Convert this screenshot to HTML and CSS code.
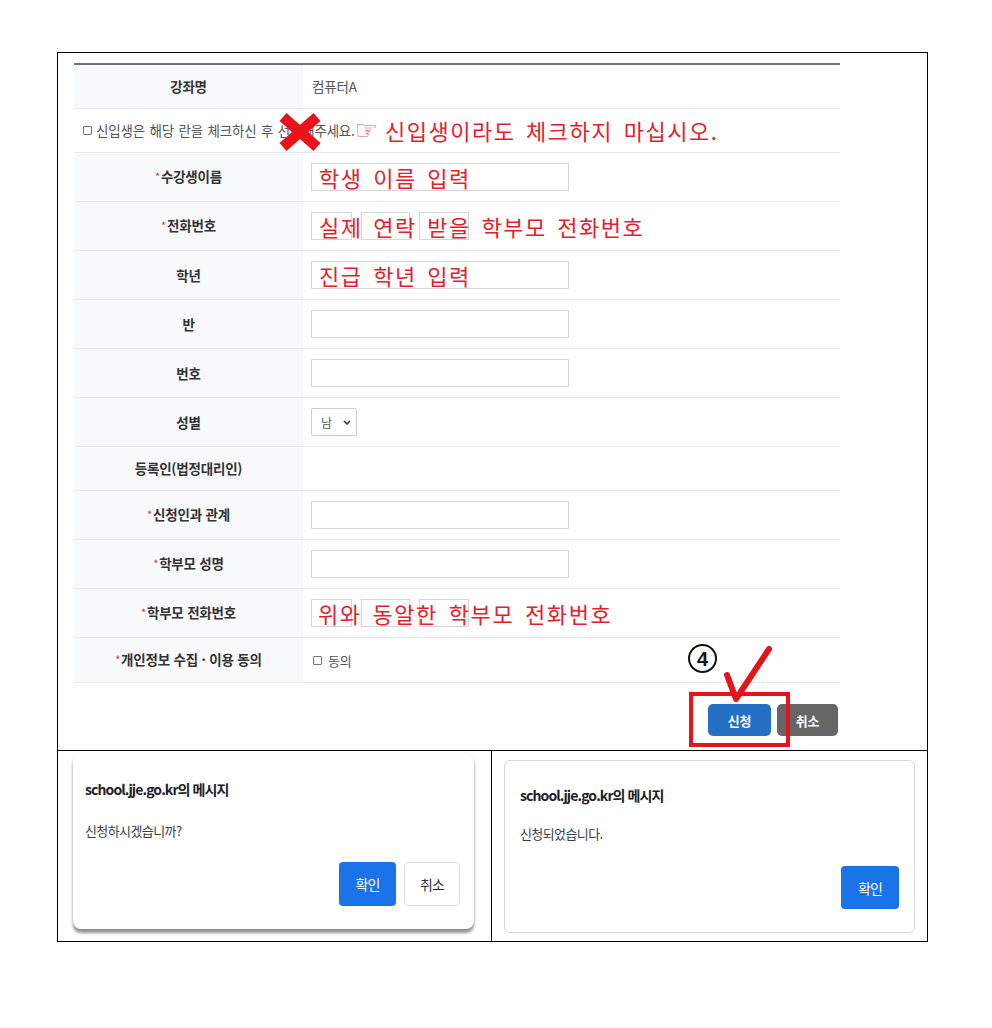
FILE: index.html
```html
<!DOCTYPE html>
<html lang="ko">
<head>
<meta charset="utf-8">
<title>방과후 수강 신청</title>
<link rel="stylesheet" href="styles.css">
</head>
<body>
<table class="sheet">
  <colgroup><col class="col-left"><col class="col-right"></colgroup>
  <tr>
    <td class="sheet-top" colspan="2">
      <div class="apply">
        <table class="form">
          <tr>
            <th>강좌명</th>
            <td class="value">컴퓨터A</td>
          </tr>
          <tr>
            <td class="notice" colspan="2">
              <div class="notice-line">
                <span class="box"></span>
                <span class="notice-text">신입생은 해당 란을 체크하신 후 선택해주세요.</span>
                <span class="hand">☞</span>
                <span class="note-inline">신입생이라도 체크하지 마십시오.</span>
              </div>
              <svg class="cross" viewBox="0 0 46 38" aria-hidden="true">
                <path d="M6 4 L40 34 M40 4 L6 34" />
              </svg>
            </td>
          </tr>
          <tr>
            <th><span class="req">*</span>수강생이름</th>
            <td class="input-cell">
              <div class="field">
                <input class="input" type="text">
                <span class="note">학생 이름 입력</span>
              </div>
            </td>
          </tr>
          <tr>
            <th><span class="req">*</span>전화번호</th>
            <td class="input-cell">
              <div class="field phone">
                <input class="input tel-1" type="text">
                <input class="input tel-2" type="text">
                <input class="input tel-3" type="text">
                <span class="note">실제 연락 받을 학부모 전화번호</span>
              </div>
            </td>
          </tr>
          <tr>
            <th>학년</th>
            <td class="input-cell">
              <div class="field">
                <input class="input" type="text">
                <span class="note">진급 학년 입력</span>
              </div>
            </td>
          </tr>
          <tr>
            <th>반</th>
            <td class="input-cell"><div class="field"><input class="input" type="text"></div></td>
          </tr>
          <tr>
            <th>번호</th>
            <td class="input-cell"><div class="field"><input class="input" type="text"></div></td>
          </tr>
          <tr>
            <th>성별</th>
            <td class="input-cell">
              <div class="field">
                <span class="select">남<svg class="chev" viewBox="0 0 8 5" aria-hidden="true"><path d="M1 1 L4 4 L7 1" /></svg></span>
              </div>
            </td>
          </tr>
          <tr>
            <th>등록인(법정대리인)</th>
            <td class="value"></td>
          </tr>
          <tr>
            <th><span class="req">*</span>신청인과 관계</th>
            <td class="input-cell"><div class="field"><input class="input" type="text"></div></td>
          </tr>
          <tr>
            <th><span class="req">*</span>학부모 성명</th>
            <td class="input-cell"><div class="field"><input class="input" type="text"></div></td>
          </tr>
          <tr>
            <th><span class="req">*</span>학부모 전화번호</th>
            <td class="input-cell">
              <div class="field phone">
                <input class="input tel-1" type="text">
                <input class="input tel-2" type="text">
                <input class="input tel-3" type="text">
                <span class="note note-tight">위와 동알한 학부모 전화번호</span>
              </div>
            </td>
          </tr>
          <tr>
            <th><span class="req">*</span>개인정보 수집 · 이용 동의</th>
            <td class="value"><span class="agree"><span class="box"></span>동의</span></td>
          </tr>
        </table>

        <div class="actions">
          <span class="step">4</span>
          <svg class="tick" viewBox="0 0 62 62" aria-hidden="true">
            <path d="M15 31 L24 55 L57 5" />
          </svg>
          <button class="btn btn-apply" type="button">신청</button>
          <button class="btn btn-cancel" type="button">취소</button>
          <span class="frame"></span>
        </div>
      </div>
    </td>
  </tr>
  <tr class="sheet-bottom">
    <td>
      <div class="dialog dialog-confirm">
        <p class="dialog-title">school.jje.go.kr의 메시지</p>
        <p class="dialog-msg">신청하시겠습니까?</p>
        <div class="dialog-actions">
          <button class="dbtn dbtn-primary" type="button">확인</button>
          <button class="dbtn dbtn-ghost" type="button">취소</button>
        </div>
      </div>
    </td>
    <td>
      <div class="dialog dialog-done">
        <p class="dialog-title">school.jje.go.kr의 메시지</p>
        <p class="dialog-msg">신청되었습니다.</p>
        <div class="dialog-actions">
          <button class="dbtn dbtn-primary" type="button">확인</button>
        </div>
      </div>
    </td>
  </tr>
</table>
</body>
</html>
```

FILE: styles.css
```css
* { box-sizing: border-box; }

html, body {
  margin: 0;
  background: #fff;
}

body {
  font-family: "Noto Sans CJK KR", "Noto Sans", sans-serif;
  color: #333;
}

/* outer sheet: one wide cell on top, two dialog cells below */
.sheet {
  border-collapse: collapse;
  table-layout: fixed;
  width: 870px;
  margin: 52px 0 0 57px;
}

.col-left { width: 434px; }
.col-right { width: 436px; }

.sheet td {
  border: 1px solid #000;
  padding: 0;
  vertical-align: top;
}

.sheet .sheet-top {
  padding: 10px 0 14px 16px;
}

.apply {
  width: 766px;
}

/* application form */
.form {
  width: 766px;
  border-collapse: collapse;
  border-top: 2px solid #6b7079;
  font-size: 13.5px;
  letter-spacing: -0.2px;
}

.form th,
.form td {
  border: 0;
  border-bottom: 1px solid #e8e8e8;
  line-height: 19px;
  vertical-align: middle;
}

.form th {
  width: 229px;
  background: #f8f9fa;
  color: #333;
  font-weight: 700;
  text-align: center;
  padding: 12px 6px;
}

.form td.value {
  padding: 12px 9px;
  color: #555;
}

.form td.input-cell {
  padding: 10px 8px;
}

.req {
  color: #d9363e;
  font-size: 11px;
  font-weight: 400;
  margin-right: 1px;
  position: relative;
  top: -1px;
}

.form td.notice {
  position: relative;
  padding: 12px 9px;
  color: #555;
}

.notice-line {
  display: flex;
  align-items: center;
  height: 19px;
  white-space: nowrap;
}

.box {
  display: inline-block;
  width: 9px;
  height: 9px;
  border: 1px solid #777;
  border-radius: 1px;
  margin-right: 4px;
  flex: none;
}

.notice-text {
  word-spacing: 1px;
}

.hand {
  font-family: "DejaVu Sans", sans-serif;
  color: #e0505f;
  font-size: 26px;
  line-height: 19px;
  margin-left: 0;
  letter-spacing: 0;
}

.note-inline,
.note {
  color: #e3212a;
  font-size: 22px;
  font-weight: 400;
  letter-spacing: 1.5px;
  word-spacing: 3px;
  white-space: nowrap;
}

.note-inline {
  line-height: 19px;
  margin-left: 7px;
}

.cross {
  position: absolute;
  left: 203px;
  top: 4px;
  width: 46px;
  height: 38px;
}

.cross path {
  fill: none;
  stroke: #e8131b;
  stroke-width: 10.5;
}

/* inputs */
.field {
  position: relative;
  display: flex;
  align-items: center;
  width: max-content;
}

.input {
  display: block;
  width: 258px;
  height: 28px;
  margin: 0;
  padding: 0 6px;
  border: 1px solid #d6d6d6;
  border-radius: 0;
  background: #fff;
  font: inherit;
}

.phone {
  gap: 9px;
}

.input.tel-1 { width: 41px; }
.input.tel-2 { width: 49px; }
.input.tel-3 { width: 50px; }

.note {
  position: absolute;
  left: 8px;
  top: 50%;
  transform: translateY(-50%);
  line-height: 24px;
}

.note-tight {
  left: 7px;
  letter-spacing: 1.6px;
}

.select {
  display: flex;
  align-items: center;
  justify-content: space-between;
  width: 46px;
  height: 28px;
  padding: 0 5px 0 9px;
  border: 1px solid #cfcfcf;
  border-radius: 2px;
  color: #555;
  font-size: 12px;
}

.chev {
  width: 8px;
  height: 5px;
}

.chev path {
  fill: none;
  stroke: #333;
  stroke-width: 1.5;
}

.agree {
  display: inline-flex;
  align-items: center;
  padding-left: 1px;
  font-size: 13px;
}

.agree .box {
  margin-right: 6px;
}

/* submit buttons with step marker */
.actions {
  position: relative;
  display: flex;
  justify-content: flex-end;
  gap: 6px;
  padding: 21px 2px 0 0;
}

.btn {
  height: 32px;
  border: 0;
  border-radius: 5px;
  color: #fff;
  font-family: inherit;
  font-size: 13px;
  font-weight: 700;
  letter-spacing: -0.3px;
  padding: 0;
}

.btn-apply {
  width: 63px;
  background: #2470c2;
}

.btn-cancel {
  width: 61px;
  background: #666;
}

.frame {
  position: absolute;
  left: 615px;
  top: 9px;
  width: 101px;
  height: 55px;
  border: 4px solid #e8141c;
}

.step {
  position: absolute;
  left: 614px;
  top: -39px;
  width: 29px;
  height: 29px;
  border: 2.5px solid #111;
  border-radius: 50%;
  display: flex;
  align-items: center;
  justify-content: center;
  font-family: "Liberation Sans", Arial, sans-serif;
  font-weight: 700;
  font-size: 20px;
  line-height: 1;
  color: #111;
}

.tick {
  position: absolute;
  left: 638px;
  top: -39px;
  width: 62px;
  height: 62px;
}

.tick path {
  fill: none;
  stroke: #e3141c;
  stroke-width: 6;
  stroke-linecap: round;
  stroke-linejoin: round;
}

/* browser message dialogs */
.sheet-bottom td {
  height: 191px;
}

.dialog {
  background: #fff;
  font-family: "Noto Sans CJK KR", "Noto Sans", sans-serif;
}

.dialog-confirm {
  margin: 2px 17px 0 15px;
  height: 176px;
  padding: 26px 14px 0 12px;
  border-radius: 8px;
  box-shadow: 0 4px 3px rgba(0, 0, 0, 0.42), 0 0 2px rgba(0, 0, 0, 0.08);
}

.dialog-done {
  margin: 9px 12px 0 12px;
  height: 173px;
  padding: 24px 15px 0 15px;
  border: 1px solid #d8d8d8;
  border-radius: 6px;
}

.dialog-title {
  margin: 0;
  font-size: 14px;
  font-weight: 700;
  line-height: 20px;
  letter-spacing: -0.9px;
  color: #202124;
}

.dialog-msg {
  margin: 22px 0 0;
  font-size: 13px;
  line-height: 20px;
  letter-spacing: -0.6px;
  color: #3c4043;
}

.dialog-done .dialog-msg {
  margin-top: 19px;
}

.dialog-actions {
  display: flex;
  justify-content: flex-end;
  gap: 8px;
  margin-top: 21px;
}

.dialog-done .dialog-actions {
  margin-top: 22px;
}

.dbtn {
  height: 44px;
  width: 57px;
  border-radius: 4px;
  font-family: inherit;
  font-size: 14px;
  letter-spacing: -0.8px;
  padding: 0;
}

.dbtn-primary {
  background: #1a73e8;
  border: 0;
  color: #fff;
}

.dbtn-ghost {
  width: 56px;
  background: #fff;
  border: 1px solid #dadce0;
  color: #333;
}

.dialog-done .dbtn {
  width: 58px;
  height: 43px;
}
```
